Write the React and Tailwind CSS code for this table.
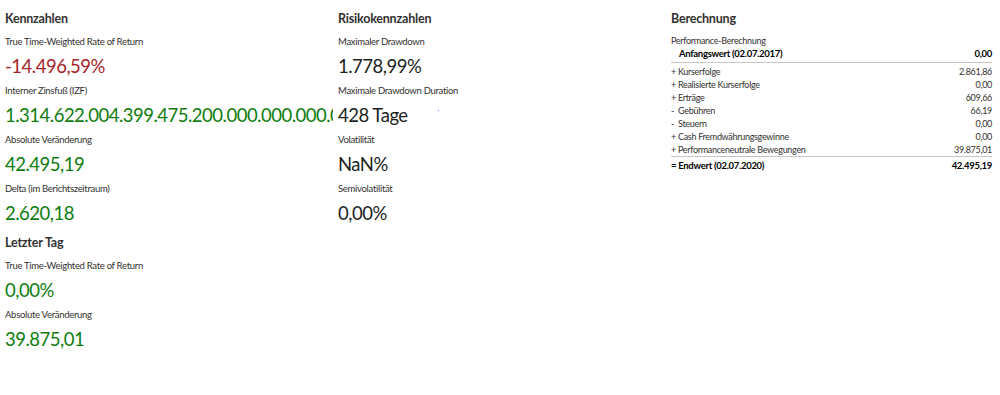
import React from "react";

const lato = { fontFamily: 'Lato, "Open Sans", sans-serif' };

const Metric = ({ label, value, color = "text-[#201f1e]" }) => (
  <div className="h-[49px] flex flex-col">
    <div className="text-[9.5px] leading-[14px] tracking-[-0.3px] text-[#323130] pt-[3px]">{label}</div>
    <div className={`text-[18.5px] leading-[26px] tracking-[-0.5px] mt-[4px] whitespace-nowrap overflow-hidden ${color}`}>
      {value}
    </div>
  </div>
);

const Heading = ({ children, top = "pt-[10px]" }) => (
  <h2 className={`text-[12.5px] leading-[18px] tracking-[-0.2px] font-bold text-[#323130] h-[22px] box-content ${top}`}>
    {children}
  </h2>
);

const red = "text-[#a4262c]";
const green = "text-[#107c10]";

const rows = [
  ["+ Kurserfolge", "2.861,86"],
  ["+ Realisierte Kurserfolge", "0,00"],
  ["+ Erträge", "609,66"],
  ["-  Gebühren", "66,19"],
  ["-  Steuern", "0,00"],
  ["+ Cash Fremdwährungsgewinne", "0,00"],
  ["+ Performanceneutrale Bewegungen", "39.875,01"],
];

export default function App() {
  return (
    <div className="w-[1000px] h-[395px] bg-white flex pl-[5px]" style={lato}>
      <div className="w-[333px] pr-[5px]">
        <div className="overflow-hidden">
          <Heading>Kennzahlen</Heading>
          <Metric label="True Time-Weighted Rate of Return" value="-14.496,59%" color={red} />
          <Metric label="Interner Zinsfuß (IZF)" value="1.314.622.004.399.475.200.000.000.000.000" color={green} />
          <Metric label="Absolute Veränderung" value="42.495,19" color={green} />
          <Metric label="Delta (im Berichtszeitraum)" value="2.620,18" color={green} />
          <Heading top="pt-[6px]">Letzter Tag</Heading>
          <Metric label="True Time-Weighted Rate of Return" value="0,00%" color={green} />
          <Metric label="Absolute Veränderung" value="39.875,01" color={green} />
        </div>
      </div>
      <div className="w-[333px] pr-[5px]">
        <Heading>Risikokennzahlen</Heading>
        <Metric label="Maximaler Drawdown" value="1.778,99%" />
        <div className="relative">
          <Metric label="Maximale Drawdown Duration" value="428 Tage" />
          <span className="absolute left-[100px] top-[29px] w-[1px] h-[1px] bg-[#6b6bff]" />
        </div>
        <Metric label="Volatilität" value="NaN%" />
        <Metric label="Semivolatilität" value="0,00%" />
      </div>
      <div className="w-[321px]">
        <Heading>Berechnung</Heading>
        <div className="text-[9px] leading-[13px] text-[#323130] tracking-[-0.3px]">
          <div className="pt-[2px]">Performance-Berechnung</div>
          <div className="flex justify-between font-bold text-black text-[9.5px] pl-[8px] border-b border-[#c8c6c4] pb-[2px]">
            <span>Anfangswert (02.07.2017)</span>
            <span>0,00</span>
          </div>
          <div className="pt-[2px]">
            {rows.map(([l, v]) => (
              <div key={l} className="flex justify-between whitespace-pre">
                <span>{l}</span>
                <span>{v}</span>
              </div>
            ))}
          </div>
          <div className="flex justify-between font-bold text-black text-[9.5px] border-t border-[#c8c6c4] pt-[2px]">
            <span>= Endwert (02.07.2020)</span>
            <span>42.495,19</span>
          </div>
        </div>
      </div>
    </div>
  );
}
